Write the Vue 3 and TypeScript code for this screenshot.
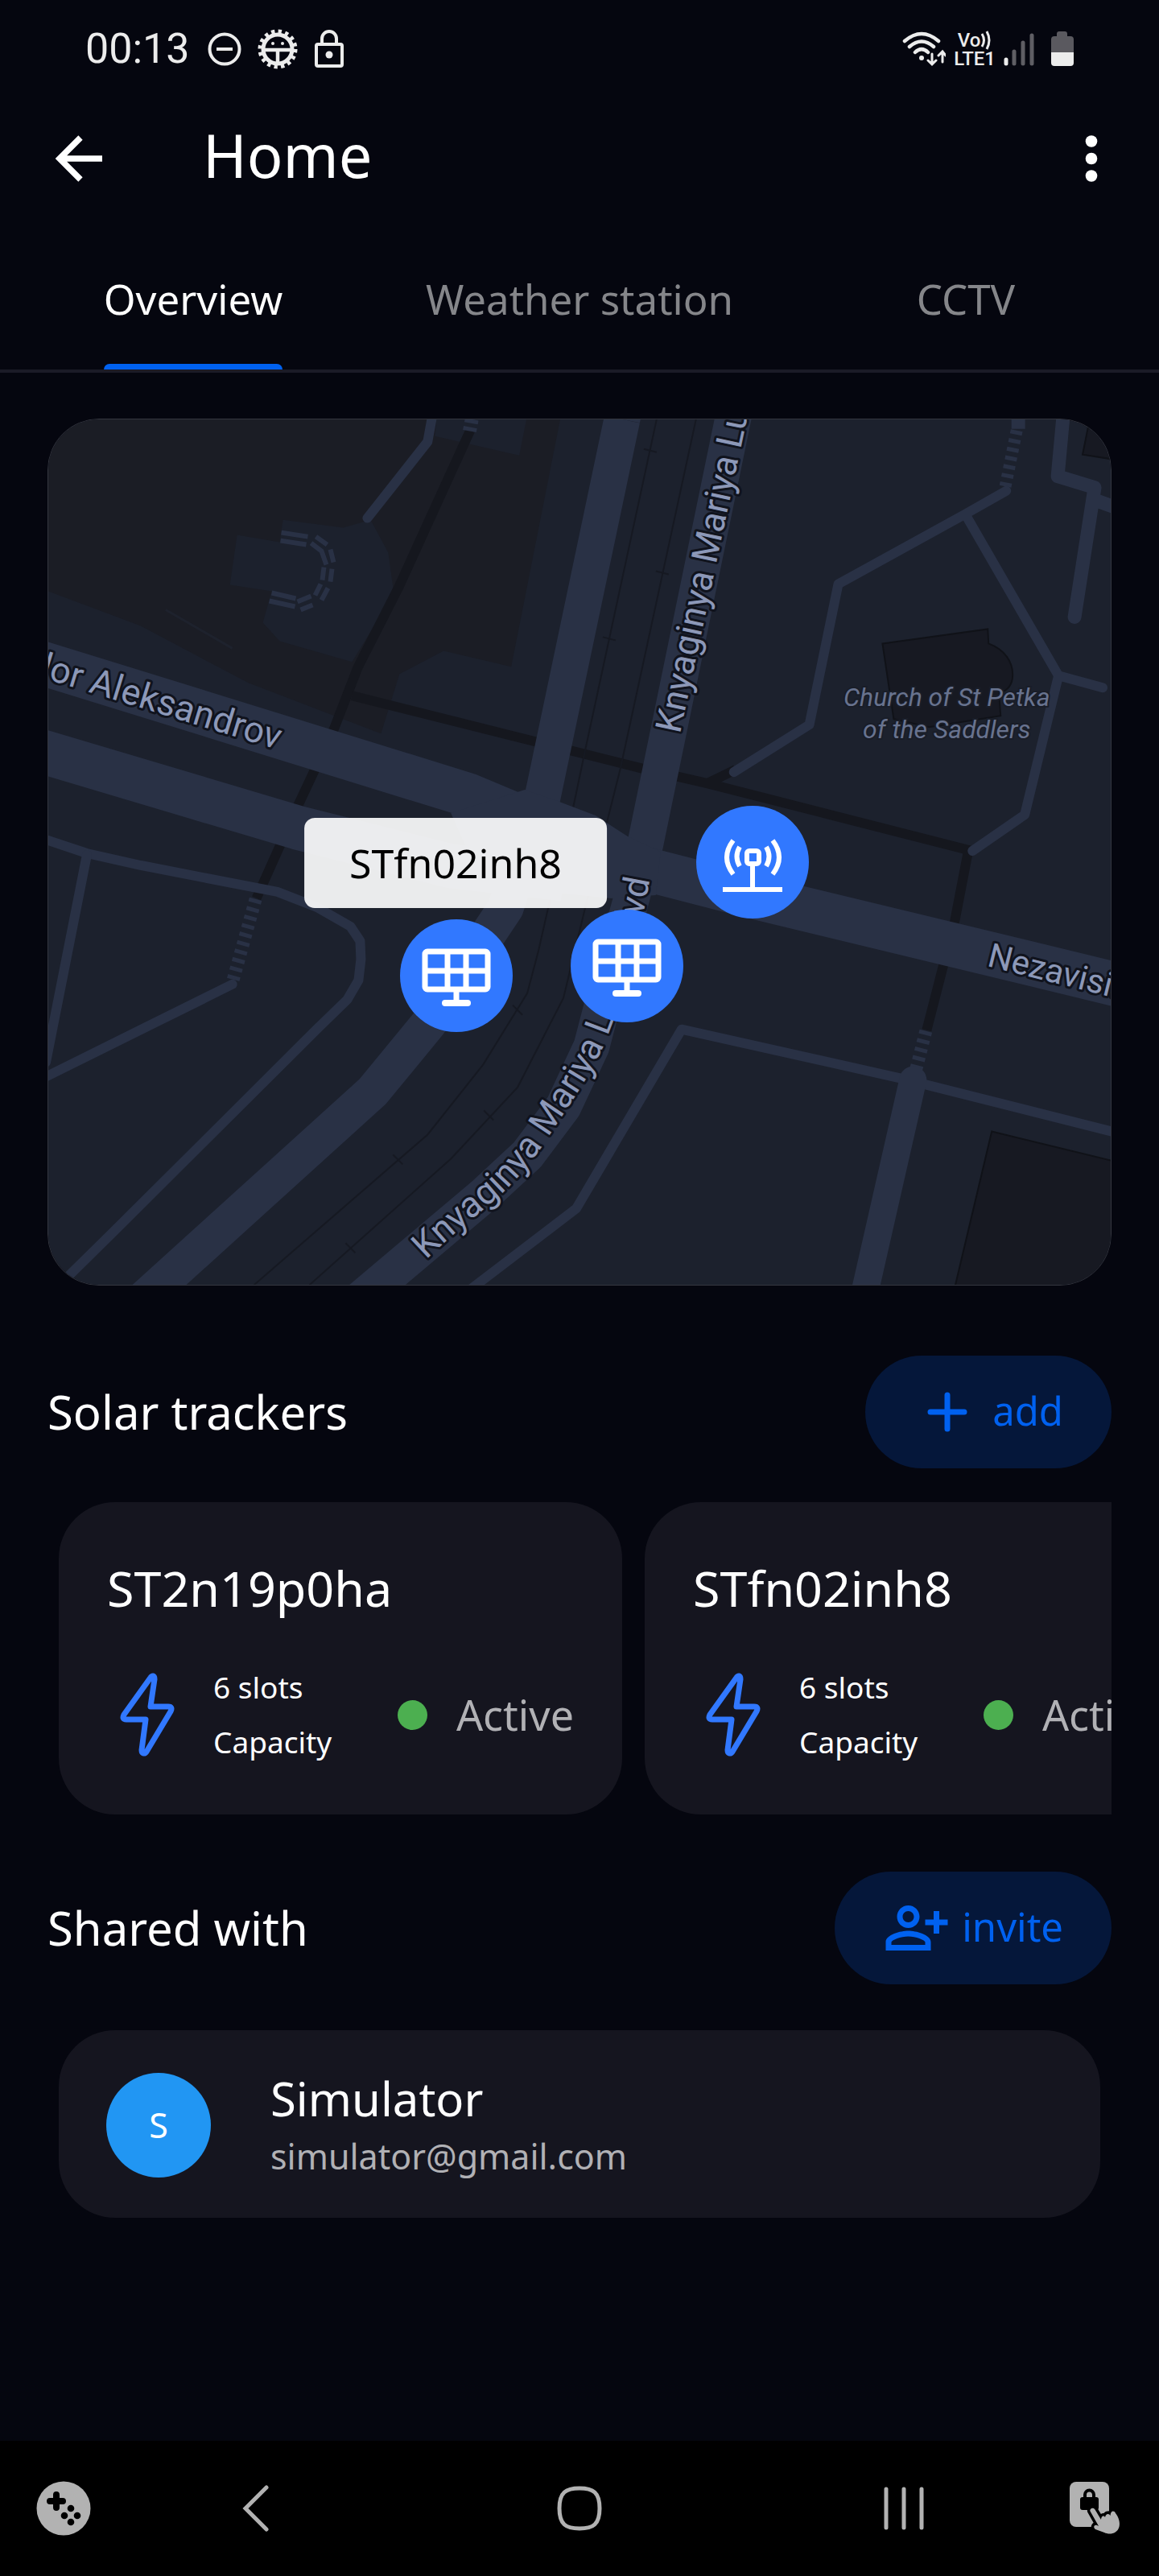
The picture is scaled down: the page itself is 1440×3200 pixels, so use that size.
<script setup lang="ts">
import { ref } from 'vue'

interface Tracker {
  id: string
  slots: number
  status: string
}

interface Member {
  name: string
  email: string
}

interface Pin {
  kind: 'panel' | 'station'
  label: string
  x: number
  y: number
}

const tabs: string[] = ['Overview', 'Weather station', 'CCTV']
const activeTab = ref<string>('Overview')

const trackers: Tracker[] = [
  { id: 'ST2n19p0ha', slots: 6, status: 'Active' },
  { id: 'STfn02inh8', slots: 6, status: 'Active' },
]

const members: Member[] = [{ name: 'Simulator', email: 'simulator@gmail.com' }]

const mapWidth = 1322
const mapHeight = 1077

// Pin centres in map units
const pins: Pin[] = [
  { kind: 'panel', label: 'STfn02inh8', x: 508, y: 692 },
  { kind: 'panel', label: 'ST2n19p0ha', x: 720, y: 680 },
  { kind: 'station', label: 'Weather station', x: 876, y: 551 },
]

const place = (x: number, y: number) => ({
  left: `${(x / mapWidth) * 100}%`,
  top: `${(y / mapHeight) * 100}%`,
})
</script>

<template>
  <div class="screen">
    <div class="status">
      <div class="status-left">
        <span class="clock">00:13</span>
        <svg width="42" height="42" viewBox="0 0 42 42" fill="none" stroke="#ececec" stroke-width="4">
          <circle cx="21" cy="21" r="18.5" />
          <path d="M11 21h20" />
        </svg>
        <svg width="50" height="50" viewBox="0 0 50 50" fill="none" stroke="#ececec">
          <circle cx="25" cy="25" r="18" stroke-width="5" />
          <circle cx="25" cy="25" r="22" stroke-width="5" stroke-dasharray="4.3 4.34" />
          <path d="M8 26h34M25 26v18" stroke-width="4.5" />
          <circle cx="19" cy="18" r="2" fill="#ececec" stroke="none" />
          <circle cx="31" cy="18" r="2" fill="#ececec" stroke="none" />
        </svg>
        <svg width="38" height="50" viewBox="0 0 38 50" fill="none" stroke="#ececec" stroke-width="4">
          <rect x="3" y="19" width="32" height="27" rx="2" />
          <path d="M10 19v-7a9 9 0 0 1 18 0v7" />
          <circle cx="19" cy="32" r="4.5" fill="#ececec" stroke="none" />
        </svg>
      </div>
      <div class="status-right">
        <svg width="54" height="46" viewBox="0 0 54 46" fill="none" stroke="#ececec" stroke-width="4.5" stroke-linecap="round">
          <path d="M3 13Q24-5 45 13M9 20Q24 7 39 20M16 27Q24 19 32 27" />
          <circle cx="24" cy="34" r="3" fill="#ececec" stroke="none" />
          <path d="M37 29v12M32 37l5 5 5-5M50 39V27M45 31l5-5 4 5" stroke-width="3" />
        </svg>
        <span class="volte">
          <span class="vo">Vo<svg width="14" height="24" viewBox="0 0 14 24" fill="none" stroke="#ececec" stroke-width="3"><path d="M2 4q5 8 0 16M8 1q6 11 0 22" /></svg></span>
          <span>LTE1</span>
        </span>
        <svg width="38" height="44" viewBox="0 0 38 44" fill="none" stroke="#5f5e64" stroke-width="5" stroke-linecap="round">
          <path d="M3 35v5" stroke="#ececec" />
          <path d="M13 25v15M24 14v26M35 5v35" />
        </svg>
        <svg class="battery" width="28" height="44" viewBox="0 0 28 44" fill="#5a595f">
          <path d="M10 0h7a3 3 0 0 1 3 3v3h4a4 4 0 0 1 4 4v16H0V10a4 4 0 0 1 4-4h3V3a3 3 0 0 1 3-3z" />
          <path d="M0 26h28v13a4 4 0 0 1-4 4H4a4 4 0 0 1-4-4z" fill="#ececec" />
        </svg>
      </div>
    </div>

    <header class="appbar">
      <button type="button" class="icon-btn" aria-label="Back">
        <svg width="60" height="60" viewBox="0 0 60 60" fill="none" stroke="#fff" stroke-width="7.5">
          <path d="M59 30H7M32 4 6 30l26 26" />
        </svg>
      </button>
      <h1>Home</h1>
      <button type="button" class="icon-btn" aria-label="More options">
        <svg width="16" height="60" viewBox="0 0 16 60" fill="#fff">
          <circle cx="8" cy="8.5" r="7.3" />
          <circle cx="8" cy="30" r="7.3" />
          <circle cx="8" cy="51.5" r="7.3" />
        </svg>
      </button>
    </header>

    <nav class="tabs">
      <button
        v-for="tab in tabs"
        :key="tab"
        type="button"
        class="tab"
        :class="{ active: tab === activeTab }"
        @click="activeTab = tab"
      >
        <span>{{ tab }}</span>
      </button>
    </nav>

    <main>
      <section class="map">
        <svg class="map-art" viewBox="59 520 1322 1077" preserveAspectRatio="xMidYMid slice">
          <rect x="59" y="520" width="1322" height="1077" fill="#1c212d" />
          <!-- park and plazas -->
          <path fill="#1b1d25" d="M59 520H696L635 828 551 808 496 837 473 911 415 889 308 848 174 777 59 734z" />
          <path fill="#1c212d" d="M542 520H654L645 565 540 541zM351 645l75 10 34-10 22 41 6 43-11 28-40 65-90-26-21-23 11-39-52-8 9-62 53 9z" />
          <path d="M205 757 288 805" stroke="#1e222d" stroke-width="3" />
          <!-- buildings -->
          <g fill="#171922" stroke="#101218" stroke-width="2">
            <path d="M1352 534 1346 564 1385 570V515H1356z" />
            <path d="M1097 799 1228 781 1229 799C1250 807 1259 822 1259 838 1259 852 1252 858 1242 861L1244 889 1155 903 1111 893z" />
            <path d="M1233 1406 1385 1443V1600H1187z" />
          </g>
          <!-- underpasses -->
          <g fill="none" stroke="#15171e" stroke-width="12">
            <path d="M584 534 562 582 495 729 444 829 415 904 369 1002 318 1116" />
            <path d="M437 864 665 921 796 954 879 973 1204 1056 1187 1144 1152 1280M879 973 914 956" />
          </g>
          <!-- tram lines -->
          <g fill="none" stroke="#161922" stroke-width="2">
            <path d="M816 520 727 932 709 1018 681 1128 669 1181 655 1234 600 1323 531 1410 315 1597" />
            <path d="M865 520 771 954 756 1014 727 1128 700 1240 643 1351 560 1440 384 1597" />
            <path d="M800 557l16 4M815 709l16 4M749 791l16 4M637 1249l12 12M601 1380l12 12M488 1435l12 12M429 1545l12 12" />
          </g>
          <!-- stairs -->
          <g fill="none" stroke="#293145">
            <path d="M586 520 583 536" stroke-width="17" stroke-dasharray="5 5" />
            <path d="M1266 520v12" stroke-width="17" />
            <path d="M1264 534 1249 608" stroke-width="15" stroke-dasharray="5 6" />
            <path d="M317 1117 288 1221" stroke-width="16" stroke-dasharray="5 6" />
            <path d="M1151 1281 1138 1332" stroke-width="16" stroke-dasharray="5 6" />
            <path
              stroke-width="6"
              d="M349 661l33 5M348 671l32 5M392 666l14 10M386 674l13 10 6 17M410 682l4 16M402 704l-2 16M412 706l-2 16M398 725l-7 14M407 730l-8 15M337 736l30 7M334 746l32 7M369 747l17-7M373 757l15-6"
            />
          </g>
          <!-- streets -->
          <g fill="none" stroke="#293145" stroke-width="12" stroke-linejoin="round" stroke-linecap="round">
            <path d="M537 515 531 548 456 643" />
            <path d="M50 1041 107 1060 174 1075 344 1108 393 1127 435 1151 447 1169 448 1192 445 1218 431 1242 395 1277 143 1528 80 1590" />
            <path d="M107 1062 56 1320M50 1341 288 1223" />
            <path d="M1251 609 1200 638 1042 725 1006 900 912 959M1200 638 1316 839 1274 1012 1209 1057M1316 839 1371 854" />
            <path d="M585 1602 716 1502 847 1279 1120 1340 1390 1408" />
            <path d="M1322 515 1315 591 1361 605 1336 766M1363 621 1385 629" stroke-width="17" />
            <path d="M1135 1342 1074 1610" stroke-width="34" />
          </g>
          <!-- boulevards -->
          <g fill="none" stroke="#293145" stroke-width="45" stroke-linejoin="round">
            <path d="M773 520 674 990 628 1128 532 1272 463 1356 175 1617" />
            <path d="M915 500 802 1048 785 1115 748 1250 735 1300 700 1375 655 1435 600 1486 440 1621" />
            <path d="M777 500 773 520" />
            <path d="M40 820 580 987 800 1079 932 1113 1400 1226" stroke-width="55" />
            <path d="M40 930 369 1028 560 1076 700 1092" stroke-width="55" />
          </g>
          <path fill="#293145" d="M652 981 695 996 740 1013 780 1039 821 1058 815 1112 760 1116 600 1100 560 1010z" />
          <!-- street names -->
          <defs>
            <path id="lower-blvd" d="M529 1566C562 1534 590 1512 616 1490 642 1467 664 1440 683 1410 708 1372 732 1338 745 1310 758 1284 776 1230 790 1180 798 1146 806 1100 814 1060" />
          </defs>
          <g class="street">
            <text transform="translate(344 931) rotate(17)" text-anchor="end">Todor Aleksandrov</text>
            <text transform="translate(845 912) rotate(-78)">Knyaginya Mariya Luiza Blvd</text>
            <text><textPath href="#lower-blvd">Knyaginya Mariya Luiza Blvd</textPath></text>
            <text class="narrow" transform="translate(1226 1200) rotate(14)">Nezavisimost</text>
          </g>
          <g class="place" text-anchor="middle">
            <text x="1177" y="877">Church of St Petka</text>
            <text x="1177" y="917">of the Saddlers</text>
          </g>
        </svg>

        <div class="tooltip" :style="place(507, 552)">STfn02inh8</div>

        <button
          v-for="pin in pins"
          :key="pin.label"
          type="button"
          class="pin"
          :aria-label="pin.label"
          :style="place(pin.x, pin.y)"
        >
          <svg v-if="pin.kind === 'panel'" viewBox="0 0 140 140" fill="none" stroke="#fff" stroke-width="7">
            <rect x="31" y="40" width="78" height="47" rx="3" />
            <path d="M31 64h78M59 40v47M82 40v47M70 87v17" />
            <path d="M56 104h28" stroke-linecap="round" stroke-width="8" />
          </svg>
          <svg v-else viewBox="0 0 140 140" fill="none" stroke="#fff" stroke-width="6">
            <rect x="63" y="56" width="15" height="16" rx="3" />
            <path d="M70 73v31M33 104h74" />
            <path d="M54 51Q47 63 54 75M87 51Q94 63 87 75M46 43Q30 64 46 85M95 43Q111 64 95 85" />
          </svg>
        </button>
      </section>

      <div class="section-head trackers-head">
        <h2>Solar trackers</h2>
        <button type="button" class="pill">
          <svg width="84" height="84" viewBox="0 0 84 84" fill="none" stroke="currentColor" stroke-width="7" stroke-linecap="round">
            <path d="M42 21v42M21 42h42" />
          </svg>
          <span>add</span>
        </button>
      </div>

      <div class="trackers">
        <article v-for="tracker in trackers" :key="tracker.id" class="card tracker">
          <h3>{{ tracker.id }}</h3>
          <div class="tracker-row">
            <svg class="bolt" width="100" height="104" viewBox="0 0 100 104" fill="none" stroke="#3178ff" stroke-width="7" stroke-linejoin="round">
              <path d="M54 6 21 52c-2 4-1 6 3 6h24l-5 38c0 5 4 5 6 2L79 48c2-4 1-6-3-6H54l5-34c0-5-3-5-5-2z" />
            </svg>
            <div class="capacity">
              <span>{{ tracker.slots }} slots</span>
              <span>Capacity</span>
            </div>
            <div class="state"><i class="dot"></i>{{ tracker.status }}</div>
          </div>
        </article>
      </div>

      <div class="section-head shared-head">
        <h2>Shared with</h2>
        <button type="button" class="pill">
          <svg width="84" height="84" viewBox="0 0 24 24" fill="currentColor">
            <path d="M9 12c2.21 0 4-1.79 4-4s-1.79-4-4-4-4 1.79-4 4 1.79 4 4 4zm0-6c1.1 0 2 .9 2 2s-.9 2-2 2-2-.9-2-2 .9-2 2-2zm0 7c-2.67 0-8 1.34-8 4v3h16v-3c0-2.66-5.33-4-8-4zm6 5H3v-.99C3.2 16.29 6.3 15 9 15s5.8 1.29 6 2v1zM20 9V6h-2v3h-3v2h3v3h2v-3h3V9z" />
          </svg>
          <span>invite</span>
        </button>
      </div>

      <article v-for="member in members" :key="member.email" class="card member">
        <div class="avatar">{{ member.name[0] }}</div>
        <div class="who">
          <h3>{{ member.name }}</h3>
          <p>{{ member.email }}</p>
        </div>
      </article>
    </main>

    <footer class="navbar">
      <button type="button" class="side" aria-label="Game tools">
        <svg width="68" height="68" viewBox="0 0 68 68">
          <circle cx="34" cy="34" r="33.5" fill="#b2b2b2" />
          <path d="M25 17v16M17 25h16" stroke="#000" stroke-width="8" stroke-linecap="round" />
          <circle cx="43" cy="34" r="4.3" />
          <circle cx="35" cy="43" r="4.3" />
          <circle cx="51" cy="43" r="4.3" />
          <circle cx="43" cy="51" r="4.3" />
        </svg>
      </button>
      <button type="button" aria-label="Back">
        <svg width="34" height="58" viewBox="0 0 34 58" fill="none" stroke="#b2b2b2" stroke-width="5" stroke-linecap="round">
          <path d="M31 3 5 29l26 26" />
        </svg>
      </button>
      <button type="button" aria-label="Home">
        <svg width="56" height="56" viewBox="0 0 56 56" fill="none" stroke="#b2b2b2" stroke-width="5">
          <path d="M28 3C45 3 53 8 53 28S45 53 28 53 3 48 3 28 11 3 28 3z" />
        </svg>
      </button>
      <button type="button" aria-label="Recent apps">
        <svg width="50" height="54" viewBox="0 0 50 54" fill="none" stroke="#b2b2b2" stroke-width="5" stroke-linecap="round">
          <path d="M3 3v48M25 3v48M47 3v48" />
        </svg>
      </button>
      <button type="button" class="side" aria-label="Lock touch">
        <svg width="66" height="68" viewBox="0 0 66 68" fill="#b2b2b2">
          <rect x="1" y="1" width="49" height="56" rx="8" />
          <rect x="14" y="20" width="23" height="16" rx="3" fill="#000" />
          <path d="M20 21v-4a5.5 5.5 0 0 1 11 0v4" fill="none" stroke="#000" stroke-width="4" />
          <path
            stroke="#000"
            stroke-width="7"
            paint-order="stroke"
            d="M26.5 37.5C25.5 34 30.5 32 32.5 35.5L40 48C40 44 43 42 45 45 46 40 50 40 51.5 43 52 37 56 36 58 40 62 45 64 52 62.5 57 60 66 50 67 44 64L33 60C30 58 31 54 35 55L37 56z"
          />
        </svg>
      </button>
    </footer>
  </div>
</template>

<style>
body {
  margin: 0;
  background: #05060f;
}
</style>

<style scoped>
.screen {
  display: flex;
  flex-direction: column;
  min-height: 100vh;
  background: #05060f;
  color: #fff;
  font-family: "Noto Sans", "Open Sans", sans-serif;
}

h1,
h2,
h3,
p {
  margin: 0;
  font-weight: 400;
}

button {
  padding: 0;
  border: 0;
  background: none;
  color: inherit;
  font: inherit;
  cursor: pointer;
}

svg {
  display: block;
}

.status {
  display: flex;
  justify-content: space-between;
  align-items: center;
  height: 122px;
  padding: 0 106px;
  color: #ececec;
  font-family: Roboto, sans-serif;
}

.status-left {
  display: flex;
  align-items: center;
  gap: 20px;
}

.clock {
  margin-right: 2px;
  font-size: 52px;
  line-height: 60px;
}

.status-right {
  display: flex;
  align-items: center;
  gap: 10px;
}

.volte {
  display: flex;
  flex-direction: column;
  align-items: center;
  font-size: 24px;
  font-weight: 500;
  line-height: 22px;
}

.vo {
  display: flex;
  align-items: center;
}

.battery {
  margin-left: 11px;
}

.appbar {
  display: flex;
  align-items: center;
  height: 150px;
  padding: 0 76px 0 68px;
}

.appbar h1 {
  flex: 1;
  padding: 0 0 8px 124px;
  font-size: 74px;
  line-height: 100px;
}

.tabs {
  display: grid;
  grid-template-columns: repeat(3, 1fr);
  height: 187px;
  border-bottom: 4px solid #1b1b27;
}

.tab {
  display: flex;
  justify-content: center;
  color: #85868a;
  font-size: 51px;
}

.tab span {
  display: flex;
  flex-direction: column;
  justify-content: space-between;
  height: 187px;
  line-height: 199px;
}

.tab span::after {
  content: "";
  flex: none;
  height: 7px;
  margin-top: -19px;
  border-radius: 7px 7px 0 0;
}

.tab.active {
  color: #fff;
}

.tab.active span::after {
  background: #0061f0;
}

main {
  padding: 57px 59px;
}

.map {
  position: relative;
  aspect-ratio: 1322 / 1077;
}

.map-art {
  width: 100%;
  height: 100%;
  box-sizing: border-box;
  border: 1px solid #34363f;
  border-radius: 64px;
}

.street {
  fill: #8c98b8;
  stroke: #10131d;
  stroke-width: 6px;
  stroke-linejoin: round;
  paint-order: stroke;
  font: 45px Roboto, sans-serif;
}

.street .narrow {
  font-size: 42px;
}

.place {
  fill: #68738f;
  stroke: #191d28;
  stroke-width: 4px;
  paint-order: stroke;
  font: italic 32px Roboto, sans-serif;
}

.tooltip {
  position: absolute;
  transform: translate(-50%, -50%);
  padding: 0 56px;
  border-radius: 13px;
  background: rgba(255, 255, 255, 0.91);
  color: #000;
  font-size: 50px;
  line-height: 112px;
}

.pin {
  position: absolute;
  width: 140px;
  height: 140px;
  transform: translate(-50%, -50%);
  border-radius: 50%;
  background: #3178ff;
}

.section-head {
  display: flex;
  justify-content: space-between;
  align-items: center;
}

.trackers-head {
  margin: 87px 0 42px;
}

.shared-head {
  margin: 71px 0 57px;
}

h2,
h3 {
  font-size: 58px;
  line-height: 78px;
}

.pill {
  display: flex;
  align-items: center;
  gap: 14px;
  height: 140px;
  padding: 0 60px;
  border-radius: 70px;
  background: #05173a;
  color: #0061f0;
  font-size: 49px;
}

.pill span {
  padding-bottom: 4px;
}

.trackers {
  display: flex;
  gap: 28px;
  padding-left: 14px;
  overflow: hidden;
}

.card {
  border-radius: 70px;
  background: #15151f;
}

.tracker {
  flex: none;
  box-sizing: border-box;
  width: 700px;
  padding: 68px 60px 56px;
}

.tracker h3 {
  font-size: 61px;
}

.tracker-row {
  display: flex;
  align-items: center;
  margin-top: 50px;
}

.capacity {
  display: flex;
  flex-direction: column;
  margin-left: 32px;
  font-size: 37px;
  line-height: 68px;
}

.state {
  display: flex;
  align-items: center;
  gap: 36px;
  margin-left: auto;
  color: #b1b1b5;
  font-size: 52px;
  line-height: 68px;
}

.dot {
  width: 37px;
  height: 37px;
  border-radius: 50%;
  background: #4caf50;
}

.member {
  display: flex;
  align-items: center;
  gap: 74px;
  margin: 0 14px;
  padding: 46px 59px 44px;
}

.avatar {
  width: 130px;
  height: 130px;
  border-radius: 50%;
  background: #2196f3;
  font-size: 43px;
  line-height: 130px;
  text-align: center;
}

.who p {
  color: #b1b1b5;
  font-size: 43px;
  line-height: 65px;
}

.navbar {
  display: grid;
  grid-template-columns: 72px repeat(3, 1fr) 72px;
  align-items: center;
  height: 168px;
  margin-top: auto;
  padding: 0 43px;
  background: #000;
}

.navbar button {
  display: flex;
  justify-content: center;
}
</style>
